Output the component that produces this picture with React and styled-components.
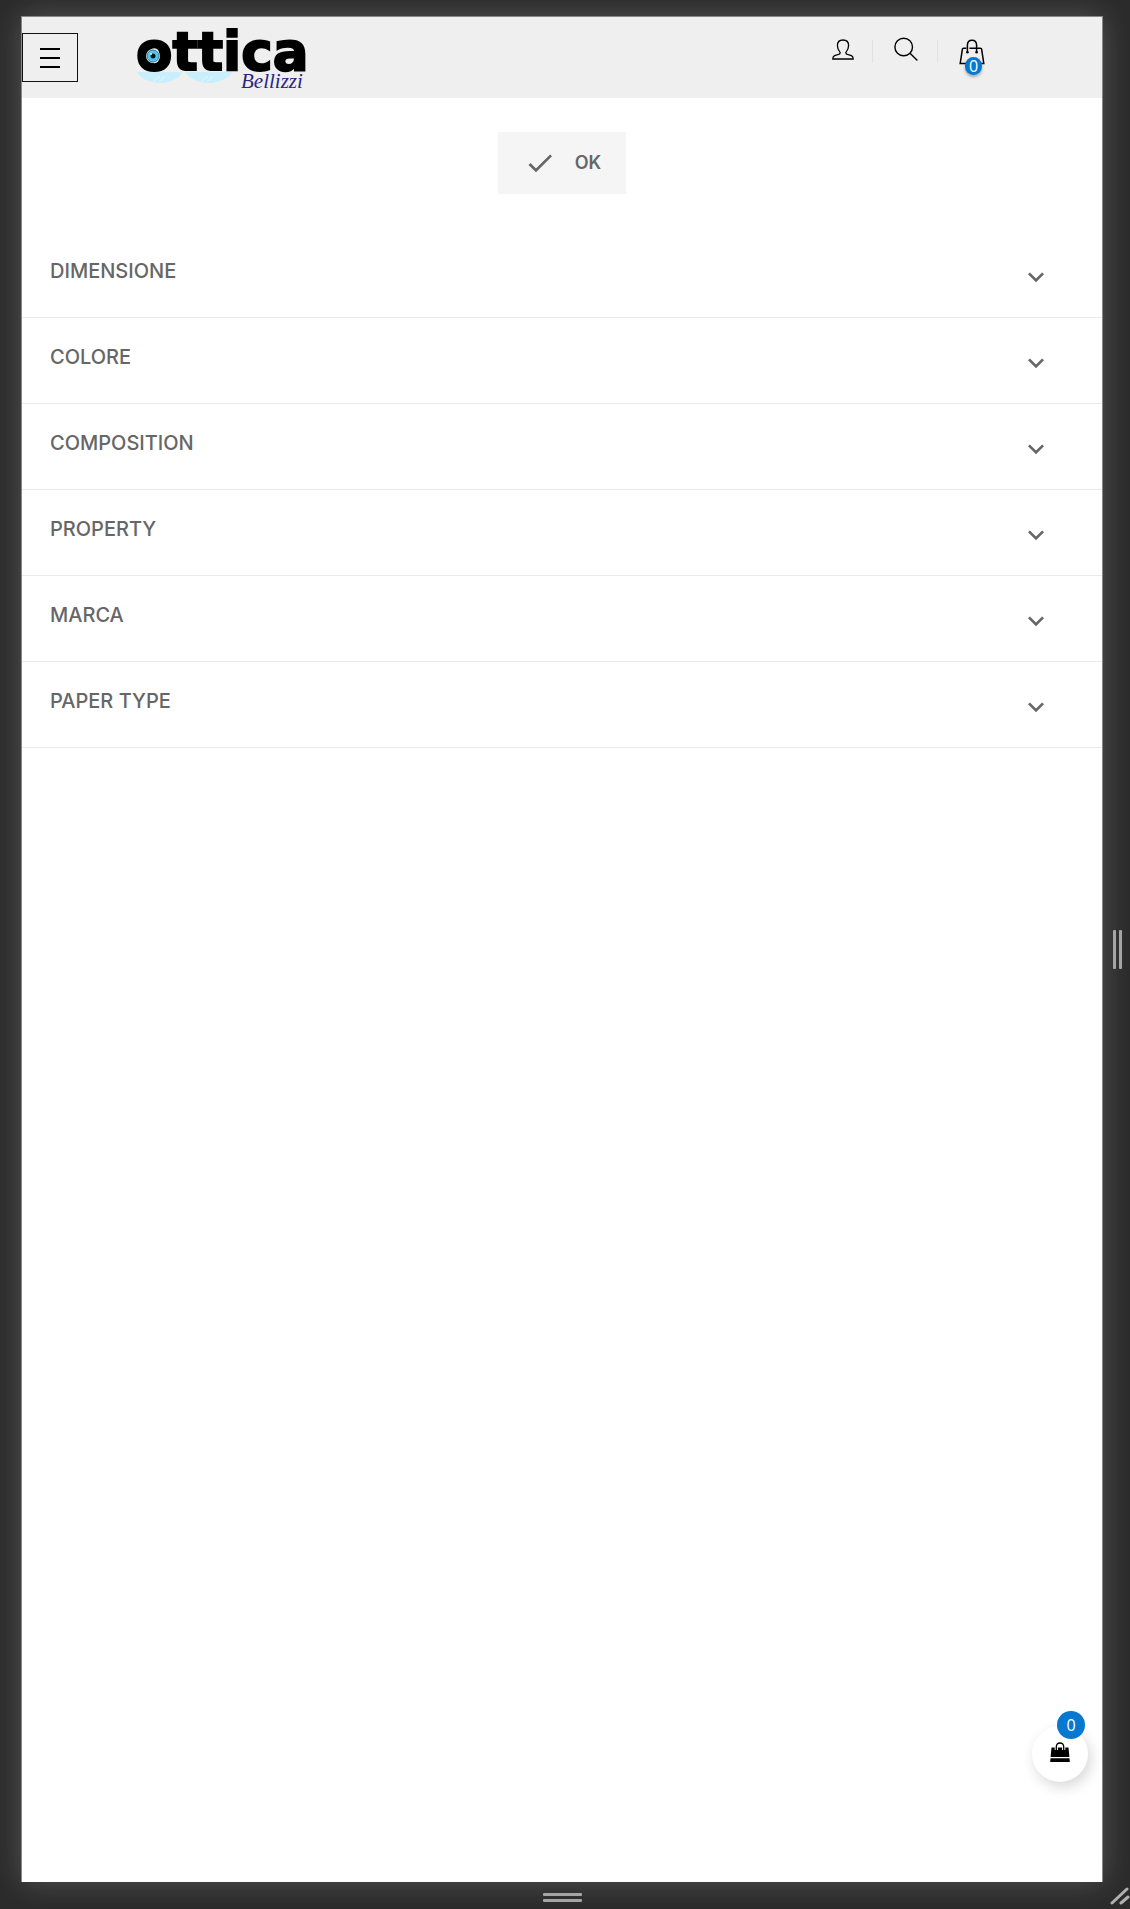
import React from 'react';
import styled, { createGlobalStyle } from 'styled-components';
import { MdCheck, MdExpandMore } from 'react-icons/md';

const GlobalStyles = createGlobalStyle`
    * {
        box-sizing: border-box;
    }

    body {
        margin: 0;
        background: #2b2b2b;
        font-family: Inter, 'Liberation Sans', sans-serif;
        color: #666;
    }

    button {
        margin: 0;
        padding: 0;
        border: 0;
        background: none;
        font: inherit;
        color: inherit;
        cursor: pointer;
    }
`;

const Shell = styled.div`
    display: grid;
    grid-template-columns: 21px 1fr 27px;
    grid-template-rows: 16px 1fr 27px;
    min-height: 100vh;
    background: #2b2b2b;
`;

const Frame = styled.main`
    grid-area: 2 / 2;
    position: relative;
    display: flex;
    flex-direction: column;
    background: #fff;
    border: 1px solid #888;
    border-bottom: 0;
    box-shadow: 0 0 28px rgba(255, 255, 255, 0.2);
`;

const Gutter = styled.div`
    grid-area: ${(props) => (props.$vertical ? '2 / 3' : '3 / 2')};
    display: flex;
    flex-direction: ${(props) => (props.$vertical ? 'row' : 'column')};
    align-items: center;
    justify-content: center;
    gap: 3px;
    padding: ${(props) => (props.$vertical ? '0 0 0 2px' : '4px 0 0')};
    z-index: 1;
`;

const Bar = styled.span`
    width: ${(props) => (props.$vertical ? '3px' : '39px')};
    height: ${(props) => (props.$vertical ? '39px' : '3px')};
    border-radius: 1px;
    background: #a5a5a5;
`;

const Corner = styled.svg`
    grid-area: 3 / 3;
    width: 27px;
    height: 27px;
    z-index: 1;
`;

const Header = styled.header`
    display: flex;
    align-items: flex-start;
    height: 81px;
    padding-right: 99px;
    background: #efefef;
`;

const MenuButton = styled.button`
    display: flex;
    align-items: center;
    justify-content: center;
    width: 56px;
    height: 49px;
    margin-top: 16px;
    border: 1px solid #111;
    color: #000;
`;

const LogoLink = styled.a`
    display: block;
    margin: 5px auto 0 57px;
    line-height: 0;
`;

const Actions = styled.nav`
    display: flex;
    margin-top: 16px;
`;

const Action = styled.button`
    position: relative;
    display: flex;
    justify-content: center;
    width: 65px;
    height: 48px;
    padding-top: 4px;
    color: #000;

    & + &::before {
        content: '';
        position: absolute;
        left: -1px;
        top: 7px;
        width: 1px;
        height: 23px;
        background: #e2e2e2;
    }
`;

const CartCount = styled.span`
    position: absolute;
    left: 27px;
    top: 24px;
    width: 17px;
    height: 18px;
    border-radius: 9px;
    background: #0678cf;
    box-shadow: 0 2px 3px rgba(0, 0, 0, 0.3);
    color: #fff;
    font: 500 16px/19px 'Open Sans', sans-serif;
    text-align: center;
`;

const ApplyButton = styled.button`
    display: flex;
    align-items: center;
    align-self: center;
    gap: 19px;
    height: 62px;
    margin: 34px 0 38px;
    padding: 0 25px 0 26px;
    background: #f5f5f5;
    font-size: 18px;
    font-weight: 600;
    line-height: 24px;
`;

const FilterList = styled.div`
    display: flex;
    flex-direction: column;
`;

const FilterRow = styled.button`
    display: flex;
    justify-content: space-between;
    width: 100%;
    height: 86px;
    padding: 27px 50px 0 28px;
    border-bottom: 1px solid #eaeaea;
    font-size: 20px;
    font-weight: 500;
    line-height: 24px;
    text-align: left;

    svg {
        margin-top: 2px;
    }
`;

const FloatingCart = styled.button`
    position: absolute;
    right: 14px;
    bottom: 100px;
    display: flex;
    align-items: center;
    justify-content: center;
    width: 56px;
    height: 56px;
    padding-bottom: 4px;
    border-radius: 50%;
    background: #fff;
    box-shadow: 3px 5px 14px rgba(0, 0, 0, 0.16);
    color: #000;
`;

const FloatingCount = styled.span`
    position: absolute;
    top: -15px;
    right: 3px;
    width: 28px;
    height: 28px;
    border-radius: 50%;
    background: #0678cf;
    color: #fff;
    font: 500 16px/28px 'Open Sans', sans-serif;
    text-align: center;
`;

const MenuIcon = () => (
    <svg width="20" height="20" viewBox="0 0 20 20" stroke="currentColor" strokeWidth="2" aria-hidden="true">
        <path d="M0 1h20M0 10h20M0 19h20" />
    </svg>
);

const UserIcon = () => (
    <svg width="26" height="26" viewBox="-4 0 26 26" fill="none" stroke="currentColor" strokeWidth="1.3" aria-hidden="true">
        <path d="M8.2 15.6C6.300 13.400 5.400 11 5.400 8.600C5.400 5 7.400 3 11 3S16.600 5 16.600 8.600C16.600 11 15.700 13.400 13.800 15.600L14.400 17L19.400 18.600C20.600 19.200 21.200 20.200 21.200 22H.8C.8 20.200 1.400 19.200 2.600 18.600L7.600 17Z" />
    </svg>
);

const SearchIcon = () => (
    <svg width="24" height="26" viewBox="0 0 24 26" fill="none" stroke="currentColor" strokeWidth="1.4" aria-hidden="true">
        <circle cx="9.700" cy="10" r="8.800" />
        <path d="M16 16.200L23.400 23.600" />
    </svg>
);

const BagIcon = () => (
    <svg width="28" height="28" viewBox="-2 0 28 28" fill="none" stroke="currentColor" strokeWidth="1.5" aria-hidden="true">
        <path d="M7.400 11.200H4.600C3.900 11.200 3.500 11.500 3.400 12.200L1.200 26.400H24.800L22.600 12.200C22.500 11.500 22.100 11.200 21.400 11.200H10.400" />
        <path d="M8.400 15V8.200C8.400 5 10.200 3.200 13 3.200S17.600 5 17.600 8.200V15" />
        <circle cx="8.400" cy="15.200" r="1.300" fill="currentColor" stroke="none" />
        <circle cx="17.600" cy="15.200" r="1.300" fill="currentColor" stroke="none" />
    </svg>
);

const ShoppingBagIcon = () => (
    <svg width="20" height="20" viewBox="0 0 20 20" aria-hidden="true">
        <path d="M1.500 5.500H18.500L19.400 15H.6ZM.5 16.200H19.500L19.800 20H.2Z" fill="currentColor" />
        <path d="M6.300 8V4.800C6.300 2.200 7.600 1 10 1S13.700 2.200 13.700 4.800V8" fill="none" stroke="#fff" strokeWidth="3.2" />
        <path d="M6.300 8V4.800C6.300 2.200 7.600 1 10 1S13.700 2.200 13.700 4.800V8" fill="none" stroke="currentColor" strokeWidth="1.300" />
    </svg>
);

const Logo = () => (
    <svg width="174" height="72" viewBox="0 0 174 72" role="img" aria-label="Ottica Bellizzi">
        <path d="M2 50H47C42 64 10 65 2 50ZM50 50H97C90 64 59 65 50 50Z" fill="#c8effb" />
        <path d="M18 60L25 54M24 60L30 54M66 60L73 54M72 60L78 54" stroke="#e3f7fc" />
        <text x="1" y="48" fontFamily="'DejaVu Sans', sans-serif" fontSize="53" fontWeight="700" stroke="#000" strokeWidth="2">ottica</text>
        <circle cx="18" cy="34" r="7" fill="#dcebf0" />
        <circle cx="18" cy="34" r="6" fill="#58c5e8" stroke="#2c819b" />
        <circle cx="18" cy="34" r="2.500" fill="#00171e" />
        <circle cx="16" cy="32" r="1" fill="#d8f6ff" />
        <text x="106" y="66" fill="#2c2584" fontFamily="'Liberation Serif', serif" fontSize="21" fontStyle="italic">Bellizzi</text>
    </svg>
);

const filters = ['DIMENSIONE', 'COLORE', 'COMPOSITION', 'PROPERTY', 'MARCA', 'PAPER TYPE'];

const App = () => (
    <Shell>
        <GlobalStyles />
        <Frame>
            <Header>
                <MenuButton type="button" aria-label="Menu">
                    <MenuIcon />
                </MenuButton>
                <LogoLink href="#">
                    <Logo />
                </LogoLink>
                <Actions>
                    <Action type="button" aria-label="Account">
                        <UserIcon />
                    </Action>
                    <Action type="button" aria-label="Search">
                        <SearchIcon />
                    </Action>
                    <Action type="button" aria-label="Cart">
                        <BagIcon />
                        <CartCount>0</CartCount>
                    </Action>
                </Actions>
            </Header>
            <ApplyButton type="button">
                <MdCheck size={32} />
                OK
            </ApplyButton>
            <FilterList>
                {filters.map((name) => (
                    <FilterRow key={name} type="button" aria-expanded="false">
                        {name}
                        <MdExpandMore size={32} />
                    </FilterRow>
                ))}
            </FilterList>
            <FloatingCart type="button" aria-label="Open cart">
                <ShoppingBagIcon />
                <FloatingCount>0</FloatingCount>
            </FloatingCart>
        </Frame>
        <Gutter $vertical>
            <Bar $vertical />
            <Bar $vertical />
        </Gutter>
        <Gutter>
            <Bar />
            <Bar />
        </Gutter>
        <Corner viewBox="0 0 27 27" stroke="#b0b0b0" strokeWidth="3" strokeLinecap="round" aria-hidden="true">
            <path d="M9 21L24 7M18 21L25 15" />
        </Corner>
    </Shell>
);

export default App;
